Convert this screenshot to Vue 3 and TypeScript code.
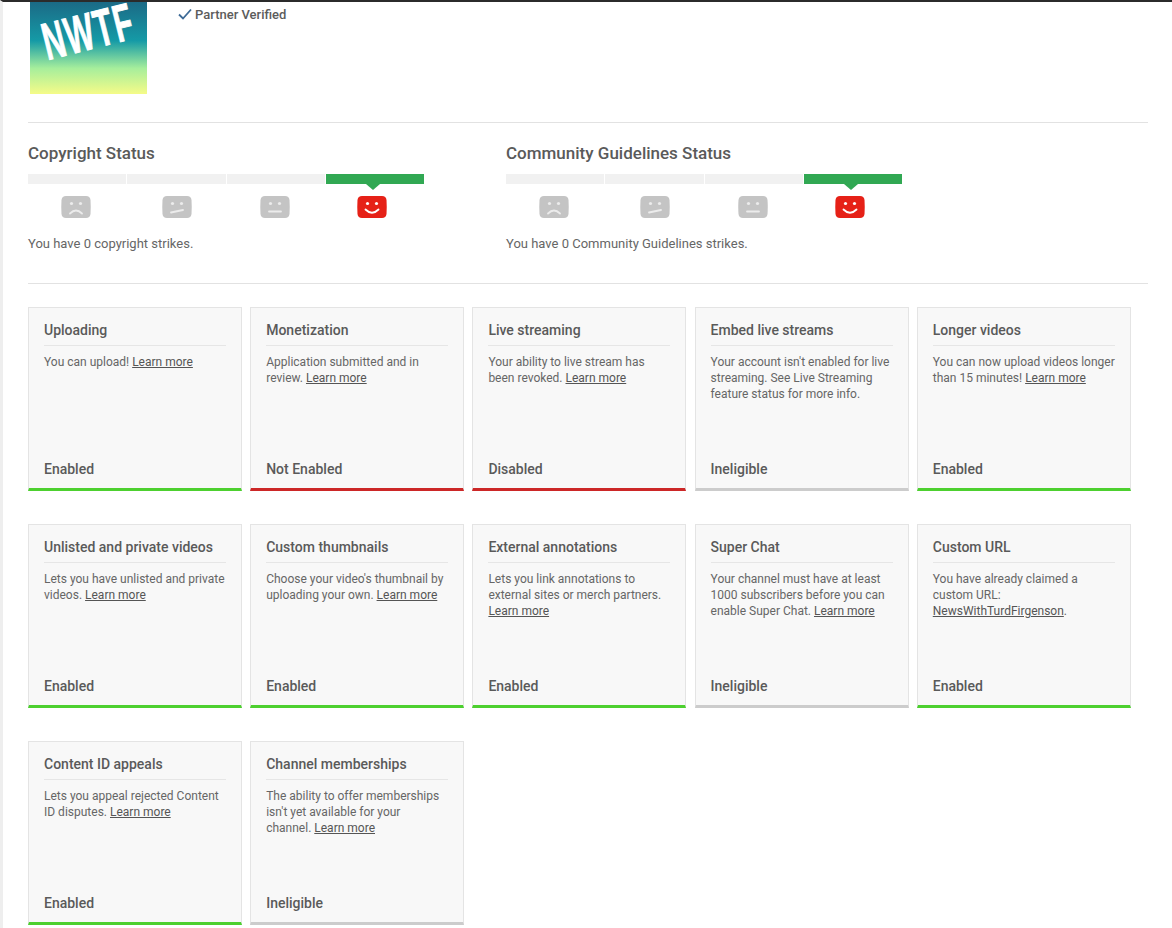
<script setup lang="ts">
type Tone = 'on' | 'off' | 'na'
interface Part { t: string; link?: boolean }
interface Card { title: string; body: Part[]; status: string; tone: Tone }
const lm: Part = { t: 'Learn more', link: true }
const cards: Card[] = [
  { title: 'Uploading', body: [{ t: 'You can upload! ' }, lm], status: 'Enabled', tone: 'on' },
  { title: 'Monetization', body: [{ t: 'Application submitted and in review. ' }, lm], status: 'Not Enabled', tone: 'off' },
  { title: 'Live streaming', body: [{ t: 'Your ability to live stream has been revoked. ' }, lm], status: 'Disabled', tone: 'off' },
  { title: 'Embed live streams', body: [{ t: "Your account isn't enabled for live streaming. See Live Streaming feature status for more info." }], status: 'Ineligible', tone: 'na' },
  { title: 'Longer videos', body: [{ t: 'You can now upload videos longer than 15 minutes! ' }, lm], status: 'Enabled', tone: 'on' },
  { title: 'Unlisted and private videos', body: [{ t: 'Lets you have unlisted and private videos. ' }, lm], status: 'Enabled', tone: 'on' },
  { title: 'Custom thumbnails', body: [{ t: "Choose your video's thumbnail by uploading your own. " }, lm], status: 'Enabled', tone: 'on' },
  { title: 'External annotations', body: [{ t: 'Lets you link annotations to external sites or merch partners. ' }, lm], status: 'Enabled', tone: 'on' },
  { title: 'Super Chat', body: [{ t: 'Your channel must have at least 1000 subscribers before you can enable Super Chat. ' }, lm], status: 'Ineligible', tone: 'na' },
  { title: 'Custom URL', body: [{ t: 'You have already claimed a custom URL: ' }, { t: 'NewsWithTurdFirgenson', link: true }, { t: '.' }], status: 'Enabled', tone: 'on' },
  { title: 'Content ID appeals', body: [{ t: 'Lets you appeal rejected Content ID disputes. ' }, lm], status: 'Enabled', tone: 'on' },
  { title: 'Channel memberships', body: [{ t: "The ability to offer memberships isn't yet available for your channel. " }, lm], status: 'Ineligible', tone: 'na' },
]
const statuses = [
  { title: 'Copyright Status', note: 'You have 0 copyright strikes.' },
  { title: 'Community Guidelines Status', note: 'You have 0 Community Guidelines strikes.' },
]
const mouths = ['M9 17.5Q15 11.5 21 17.5', 'M9 16.5L21 14', 'M9 15.5H21', 'M8.5 13.5Q15 20 21.5 13.5']
const faceShape = 'M5 0H25Q29 0 29.5 4Q30 11 29.5 18Q29 22 25 22H5Q1 22 .5 18Q0 11 .5 4Q1 0 5 0Z'
</script>

<template>
  <div class="page">
    <header class="head">
      <div class="logo"><span class="logo-text">NWTF</span></div>
      <div class="verified">
        <svg class="check" width="14" height="12" viewBox="0 0 14 12"><path d="M1 6.5L5 10.5L13 1.5" fill="none" stroke="#3d6a96" stroke-width="1.8" /></svg>
        <span>Partner Verified</span>
      </div>
    </header>

    <section class="statuses">
      <div v-for="s in statuses" :key="s.title" class="status">
        <h2 class="status-title">{{ s.title }}</h2>
        <div class="meter">
          <i class="seg"></i><i class="seg"></i><i class="seg"></i><i class="seg current"></i>
        </div>
        <div class="faces">
          <svg v-for="(m, i) in mouths" :key="i" :class="['face', 'face-' + i]" width="30" height="22" viewBox="0 0 30 22">
            <path :d="faceShape" :fill="i === 3 ? '#e62117' : '#c4c4c4'" />
            <circle cx="10.5" cy="7.5" r="1.6" :fill="i === 3 ? '#fff' : '#ececec'" />
            <circle cx="19.5" cy="7.5" r="1.6" :fill="i === 3 ? '#fff' : '#ececec'" />
            <path :d="m" fill="none" :stroke="i === 3 ? '#fff' : '#ececec'" stroke-width="1.8" stroke-linecap="round" />
          </svg>
        </div>
        <p class="note">{{ s.note }}</p>
      </div>
    </section>

    <section class="grid">
      <article v-for="c in cards" :key="c.title" :class="['card', c.tone]">
        <h3 class="card-title">{{ c.title }}</h3>
        <p class="card-body"><template v-for="(p, i) in c.body" :key="i"><a v-if="p.link" class="link">{{ p.t }}</a><template v-else>{{ p.t }}</template></template></p>
        <div class="card-status">{{ c.status }}</div>
      </article>
    </section>
  </div>
</template>

<style>
html, body { margin: 0; background: #fff; overflow: hidden; }
</style>

<style scoped>
.page {
  box-sizing: border-box;
  width: 1172px;
  height: 928px;
  overflow: hidden;
  padding: 0 24px 0 25px;
  border-left: 3px solid #eeeeee;
  border-top: 2px solid #2b2b2b;
  font-family: Roboto, "Liberation Sans", sans-serif;
  color: #555;
}
.head {
  display: flex;
  height: 120px;
  border-bottom: 1px solid #e2e2e2;
}
.logo {
  width: 117px;
  height: 92px;
  margin-left: 2px;
  background: linear-gradient(#1b6a86 0%, #159aa6 42%, #a6ee9c 72%, #f5fb88 100%);
  display: flex;
  justify-content: center;
}
.logo-text {
  color: #fff;
  font-family: "Liberation Sans", sans-serif;
  font-weight: 700;
  font-size: 30px;
  letter-spacing: 1.5px;
  line-height: 20px;
  height: 20px;
  margin-top: 20px;
  -webkit-text-stroke: 0.5px #fff;
  transform: rotate(-14deg) scale(1, 1.75);
  white-space: nowrap;
}
.verified {
  display: flex;
  align-items: center;
  gap: 3px;
  height: 14px;
  margin: 5px 0 0 31px;
  font-size: 13px;
  font-weight: 500;
  color: #5c5c5c;
}
.statuses {
  display: flex;
  height: 161px;
  padding-top: 20px;
  box-sizing: border-box;
  border-bottom: 1px solid #e2e2e2;
}
.status { width: 478px; }
.status-title {
  margin: 0;
  font-size: 17px;
  line-height: 20px;
  font-weight: 500;
  color: #5a5a5a;
}
.meter {
  display: flex;
  gap: 1px;
  width: 396px;
  margin-top: 11px;
}
.seg {
  position: relative;
  flex: 1;
  height: 10px;
  background: #f1f1f1;
}
.seg.current { background: #31a853; }
.seg.current::after {
  content: "";
  position: absolute;
  left: 40px;
  top: 10px;
  border: 7px solid transparent;
  border-top: 6px solid #31a853;
  border-bottom: 0;
}
.faces { display: flex; margin-top: 12px; height: 22px; }
.face { display: block; flex: none; }
.face-0 { margin-left: 33px; }
.face-1 { margin-left: 71px; }
.face-2 { margin-left: 68px; }
.face-3 { margin-left: 67px; }
.note {
  margin: 18px 0 0;
  font-size: 13px;
  line-height: 16px;
  color: #666;
}
.grid {
  display: grid;
  grid-template-columns: repeat(5, 214px);
  column-gap: 8.2px;
  row-gap: 33px;
  margin-top: 23px;
}
.card {
  box-sizing: border-box;
  height: 184px;
  display: flex;
  flex-direction: column;
  padding: 14px 15px 0;
  background: #f8f8f8;
  border: 1px solid #e4e4e4;
  border-bottom: 3px solid;
}
.card.on { border-bottom-color: #4dd02f; }
.card.off { border-bottom-color: #cc2727; }
.card.na { border-bottom-color: #cccccc; }
.card-title {
  margin: 0;
  padding-bottom: 7px;
  font-size: 14px;
  line-height: 16px;
  font-weight: 500;
  color: #5a5a5a;
  border-bottom: 1px solid #e6e6e6;
}
.card-body {
  flex: 1;
  margin: 8px 0 0;
  font-size: 12px;
  line-height: 16px;
  color: #666;
}
.link { color: #555; text-decoration: underline; }
.card-status {
  font-size: 14px;
  line-height: 16px;
  font-weight: 500;
  color: #5a5a5a;
  margin-bottom: 11px;
}
</style>
